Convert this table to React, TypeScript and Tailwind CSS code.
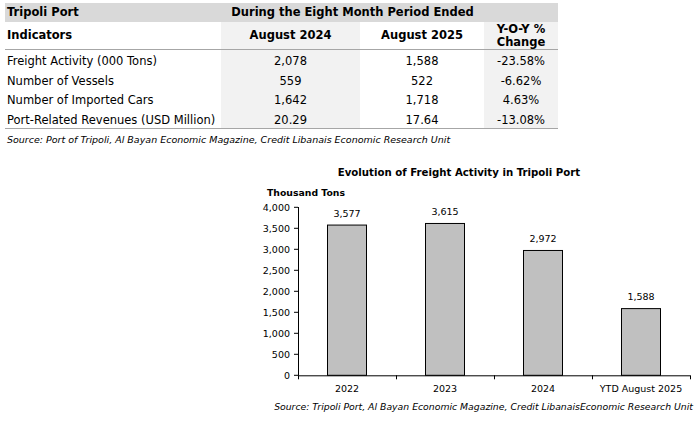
import React from "react";

const rows = [
  ["Freight Activity (000 Tons)", "2,078", "1,588", "-23.58%"],
  ["Number of Vessels", "559", "522", "-6.62%"],
  ["Number of Imported Cars", "1,642", "1,718", "4.63%"],
  ["Port-Related Revenues (USD Million)", "20.29", "17.64", "-13.08%"],
];

const bars = [
  { label: "2022", v: 3577, t: "3,577" },
  { label: "2023", v: 3615, t: "3,615" },
  { label: "2024", v: 2972, t: "2,972" },
  { label: "YTD August 2025", v: 1588, t: "1,588" },
];

function Chart() {
  const x0 = 298;
  const x1 = 690;
  const yZero = 375.3;
  const scale = 168 / 4000;
  const cw = (x1 - x0) / 4;
  const ticks = [0, 500, 1000, 1500, 2000, 2500, 3000, 3500, 4000];
  const font = "'DejaVu Sans', Verdana, sans-serif";
  return (
    <svg width={698} height={270} viewBox="0 153 698 270" className="block">
      <text x={459} y={175.5} textAnchor="middle" fontFamily={font} fontSize={10.2} fontWeight={700} fill="#000">
        Evolution of Freight Activity in Tripoli Port
      </text>
      <text x={267} y={196} fontFamily={font} fontSize={9.3} fontWeight={700} fill="#000">
        Thousand Tons
      </text>
      {ticks.map((t) => {
        const y = yZero - t * scale;
        return (
          <g key={t}>
            <line x1={294} x2={x0} y1={y} y2={y} stroke="#000" strokeWidth={1} />
            <text x={290} y={y + 3.5} textAnchor="end" fontFamily={font} fontSize={9.5} fill="#000">
              {t.toLocaleString("en-US")}
            </text>
          </g>
        );
      })}
      <line x1={x0 + 0.5} x2={x0 + 0.5} y1={207} y2={yZero} stroke="#000" strokeWidth={1} />
      {bars.map((b, i) => {
        const cx = x0 + cw * i + cw / 2;
        const h = b.v * scale;
        return (
          <g key={b.label}>
            <rect x={cx - 19.5} y={yZero - h} width={39} height={h} fill="#c0c0c0" stroke="#000" strokeWidth={1} />
            <text x={cx} y={yZero - h - 8.5} textAnchor="middle" fontFamily={font} fontSize={9.5} fill="#000">
              {b.t}
            </text>
            <text x={cx} y={391.5} textAnchor="middle" fontFamily={font} fontSize={9.5} fill="#000">
              {b.label}
            </text>
          </g>
        );
      })}
      <line x1={x0} x2={x1} y1={yZero + 0.5} y2={yZero + 0.5} stroke="#000" strokeWidth={1} />
      {[0, 1, 2, 3, 4].map((i) => (
        <line key={i} x1={x0 + cw * i + 0.5} x2={x0 + cw * i + 0.5} y1={yZero} y2={yZero + 4} stroke="#000" strokeWidth={1} />
      ))}
      <text x={693} y={410} textAnchor="end" fontFamily={font} fontSize={9.3} fontStyle="italic" fill="#000">
        Source: Tripoli Port, Al Bayan Economic Magazine, Credit LibanaisEconomic Research Unit
      </text>
    </svg>
  );
}

export default function App() {
  return (
    <div className="w-[698px] h-[423px] bg-white overflow-hidden text-black" style={{ fontFamily: "'DejaVu Sans', Verdana, sans-serif" }}>
      <div className="pt-[3px] pl-[5px] h-[153px]">
        <div className="w-[553px]">
          <div className="flex h-[19px] bg-[#d9d9d9] items-center text-[11.5px] font-bold">
            <div className="w-[216px] pl-[2px]">Tripoli Port</div>
            <div className="w-[263px] text-center">During the Eight Month Period Ended</div>
            <div className="flex-1" />
          </div>
          <div className="flex h-[28px] border-b border-[#a6a6a6] text-[11.5px] font-bold">
            <div className="w-[216px] pl-[2px] flex items-center">Indicators</div>
            <div className="w-[139px] bg-[#f2f2f2] flex items-center justify-center">August 2024</div>
            <div className="w-[124px] flex items-center justify-center">August 2025</div>
            <div className="flex-1 bg-[#f2f2f2] flex flex-col items-center justify-center leading-[13px]">
              <span>Y-O-Y %</span>
              <span>Change</span>
            </div>
          </div>
          <div className="border-b border-[#a6a6a6] text-[11.5px]">
            {rows.map((r, i) => (
              <div key={i} className="flex h-[19.5px] leading-[19.5px]">
                <div className="w-[216px] pl-[2px] pt-[2px]">{r[0]}</div>
                <div className="w-[139px] bg-[#f2f2f2] pt-[2px] text-center">{r[1]}</div>
                <div className="w-[124px] pt-[2px] text-center">{r[2]}</div>
                <div className="flex-1 bg-[#f2f2f2] pt-[2px] text-center">{r[3]}</div>
              </div>
            ))}
          </div>
          <div className="pl-[2px] pt-[5px] text-[9.5px] italic leading-[11px]">
            Source: Port of Tripoli, Al Bayan Economic Magazine, Credit Libanais Economic Research Unit
          </div>
        </div>
      </div>
      <Chart />
    </div>
  );
}
